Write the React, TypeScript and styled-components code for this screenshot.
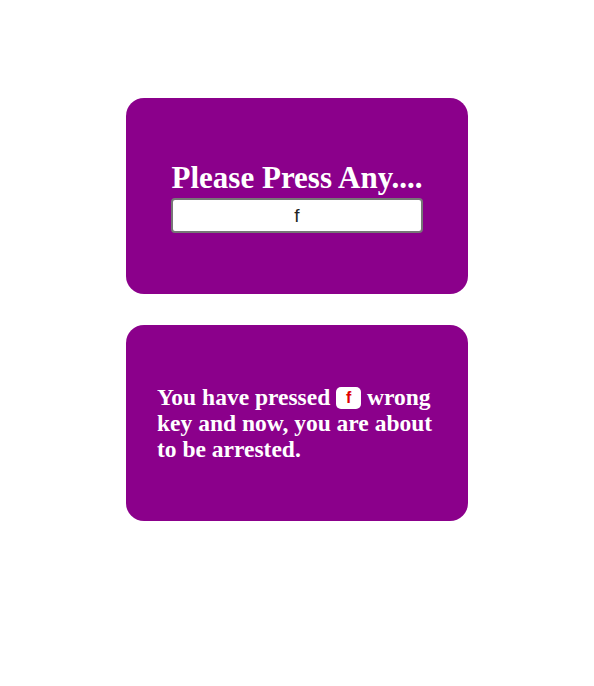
import React from 'react';
import styled, { createGlobalStyle } from 'styled-components';

const GlobalStyle = createGlobalStyle`
  *, *::before, *::after {
    box-sizing: border-box;
  }

  body {
    margin: 0;
    padding: 0;
    background: #fff;
    font-family: 'Liberation Serif', 'Times New Roman', serif;
  }
`;

const Page = styled.main`
  display: flex;
  flex-direction: column;
  align-items: center;
  gap: 31px;
  padding-top: 98px;
`;

const Card = styled.section`
  width: 342px;
  height: 196px;
  background: #8b008b;
  border-radius: 18px;
  display: flex;
  flex-direction: column;
  align-items: center;
  justify-content: center;
  color: #fff;
`;

const Title = styled.h1`
  margin: 2px 0 3px;
  font-size: 31px;
  font-weight: 700;
  line-height: 1.1;
`;

const KeyInput = styled.input`
  width: 252px;
  height: 35px;
  border: 2px solid #777;
  border-radius: 4px;
  background: #fff;
  text-align: center;
  font-family: 'Liberation Sans', Arial, sans-serif;
  font-size: 19px;
  color: #222;
  outline: none;
`;

const Message = styled.p`
  margin: 0;
  width: 280px;
  font-size: 23.5px;
  font-weight: 700;
  line-height: 26px;
`;

const KeyBadge = styled.span`
  display: inline-block;
  min-width: 25px;
  height: 22px;
  padding: 0 6px;
  border-radius: 5px;
  background: #fff;
  color: #e00000;
  font-family: 'Liberation Sans', Arial, sans-serif;
  font-size: 16px;
  line-height: 22px;
  text-align: center;
  vertical-align: 2px;
`;

export default function App() {
  const [key, setKey] = React.useState('f');

  return (
    <Page>
      <GlobalStyle />
      <Card>
        <Title>Please Press Any....</Title>
        <KeyInput
          value={key}
          maxLength={1}
          onChange={(e) => setKey(e.target.value.slice(-1))}
        />
      </Card>
      <Card>
        <Message>
          You have pressed <KeyBadge>{key}</KeyBadge> wrong key and now, you are about to be arrested.
        </Message>
      </Card>
    </Page>
  );
}
